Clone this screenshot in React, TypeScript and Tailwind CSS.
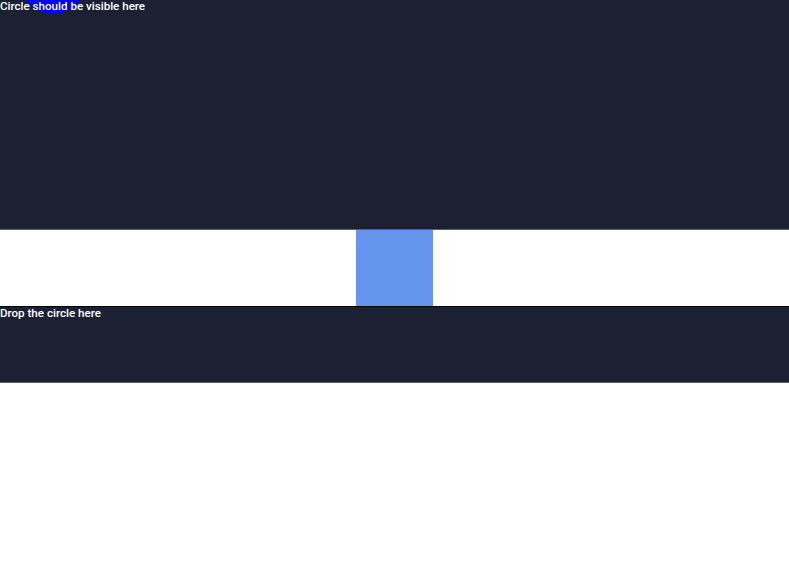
import React from "react";

export default function App() {
  return (
    <div
      className="relative h-[563px] w-full overflow-hidden bg-white"
      style={{ fontFamily: 'Roboto, "Liberation Sans", Arial, sans-serif' }}
    >
      <div className="relative h-[230px] overflow-hidden border-b border-[#5a5f6e] bg-[#1b2033]">
        <div className="absolute left-[20px] top-[-52px] h-[66px] w-[66px] rounded-full bg-[#0000ff]" />
        <div className="relative text-[11.6px] font-medium leading-[12px] text-white">Circle should be visible here</div>
      </div>
      <div className="flex h-[76px] justify-center">
        <div className="h-full w-[77px] bg-[#6495ed]" />
      </div>
      <div className="h-[77px] border-t border-black border-b border-b-[#5a5f6e] bg-[#1b2033]">
        <div className="text-[11.6px] font-medium leading-[12px] text-white">Drop the circle here</div>
      </div>
    </div>
  );
}
